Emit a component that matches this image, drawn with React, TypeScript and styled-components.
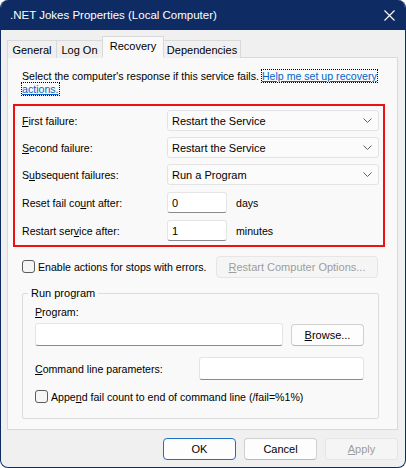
import React from 'react';
import styled, { createGlobalStyle } from 'styled-components';

const GlobalStyle = createGlobalStyle`
  html, body {
    margin: 0;
    padding: 0;
    background: #ffffff;
  }
  body {
    font-family: "Liberation Sans", Arial, sans-serif;
    font-size: 10.6px;
    color: #000000;
  }
`;

const Window = styled.div`
  width: 406px;
  height: 468px;
  box-sizing: border-box;
  display: flex;
  flex-direction: column;
  background: #f0f0f0;
  border: 1px solid #0e2b63;
  border-top: none;
  border-radius: 8px;
  overflow: hidden;
`;

const TitleBar = styled.div`
  height: 30px;
  flex-shrink: 0;
  display: flex;
  align-items: center;
  justify-content: space-between;
  padding: 0 10px 0 9px;
  background: #0e2b63;
  color: #ffffff;
  font-family: "Liberation Sans", Arial, sans-serif;
  font-size: 11.5px;
`;

const Body = styled.div`
  flex: 1;
  display: flex;
  flex-direction: column;
  padding: 7px 7px 0 6px;
`;

const TabStrip = styled.div`
  display: flex;
  align-items: flex-end;
  height: 21px;
  margin-bottom: -1px;
  padding-left: 1px;
`;

const Tab = styled.div<{ $active?: boolean; $w: number }>`
  position: relative;
  box-sizing: border-box;
  width: ${p => p.$w}px;
  height: ${p => (p.$active ? 22 : 18)}px;
  margin-left: -1px;
  border: 1px solid #d9d9d9;
  border-bottom: ${p => (p.$active ? '1px solid #f9f9f9' : 'none')};
  background: ${p => (p.$active ? '#f9f9f9' : '#f0f0f0')};
  z-index: ${p => (p.$active ? 1 : 0)};
  display: flex;
  align-items: center;
  justify-content: center;
  padding-bottom: ${p => (p.$active ? 3 : 0)}px;
  font-size: 11px;
`;

const Panel = styled.div`
  height: 373px;
  box-sizing: border-box;
  border: 1px solid #d9d9d9;
  background: #f9f9f9;
  display: flex;
  flex-direction: column;
`;

const Intro = styled.p`
  margin: 12px 10px 0 14px;
  line-height: 13px;
`;

const Link = styled.span`
  color: #0066cc;
  text-decoration: underline;
  outline: 1px dotted #000000;
  outline-offset: 0;
  white-space: nowrap;
`;

const Highlight = styled.div`
  margin: 8px 12px 0 5px;
  border: 2px solid #ee1111;
  padding: 4px 4px 4px 7px;
  display: flex;
  flex-direction: column;
  gap: 6px;
`;

const Row = styled.div<{ $gapTop?: number }>`
  display: grid;
  grid-template-columns: 145px auto 1fr;
  align-items: center;
  height: 21px;
  margin-top: ${p => p.$gapTop ?? 0}px;
`;

const Combo = styled.div`
  grid-column: 2 / 4;
  box-sizing: border-box;
  height: 21px;
  display: flex;
  align-items: center;
  justify-content: space-between;
  padding: 0 6px 0 4px;
  background: #fbfbfb;
  border: 1px solid #e3e3e3;
  border-radius: 3px;
  font-size: 11px;
`;

const TextBox = styled.div<{ $w?: number; $h?: number }>`
  box-sizing: border-box;
  width: ${p => (p.$w ? `${p.$w}px` : 'auto')};
  height: ${p => p.$h ?? 21}px;
  display: flex;
  align-items: center;
  padding-left: 4px;
  background: #ffffff;
  border: 1px solid #e5e5e5;
  border-bottom-color: #8a8a8a;
  border-radius: 3px;
  font-size: 11px;
`;

const Unit = styled.span`
  margin-left: 9px;
`;

const Key = styled.u`
  text-decoration: underline;
  text-underline-offset: 1px;
`;

const CheckRow = styled.div<{ $m: string }>`
  display: flex;
  align-items: center;
  margin: ${p => p.$m};
  height: 21px;
`;

const Check = styled.span`
  box-sizing: border-box;
  width: 13px;
  height: 13px;
  border: 1px solid #5c5c5c;
  border-radius: 3px;
  background: #f5f5f5;
  margin-right: 3px;
  flex-shrink: 0;
`;

const Button = styled.div<{ $w: number; $disabled?: boolean; $default?: boolean }>`
  box-sizing: border-box;
  width: ${p => p.$w}px;
  height: 22px;
  display: flex;
  align-items: center;
  justify-content: center;
  border-radius: 4px;
  font-size: 11px;
  background: ${p => (p.$disabled ? '#f5f5f5' : '#fdfdfd')};
  color: ${p => (p.$disabled ? '#9d9d9d' : '#000000')};
  border: 1px solid ${p => (p.$default ? '#1c6fc4' : p.$disabled ? '#e5e5e5' : '#d0d0d0')};
  border-bottom-color: ${p => (p.$default ? '#1c6fc4' : p.$disabled ? '#e5e5e5' : '#b8b8b8')};
`;

const PushRight = styled.div`
  margin-left: auto;
`;

const Group = styled.fieldset`
  margin: 10px 18px 0 14px;
  padding: 6px 14px 11px 12px;
  border: 1px solid #dcdcdc;
  border-radius: 2px;
  min-width: 0;
`;

const Legend = styled.legend`
  padding: 0 3px;
  margin-left: -7px;
  line-height: 13px;
  font-size: 11px;
`;

const FieldLabel = styled.div`
  line-height: 13px;
  margin-bottom: 4px;
`;

const InlineRow = styled.div<{ $mt: number }>`
  display: flex;
  align-items: center;
  justify-content: space-between;
  margin-top: ${p => p.$mt}px;
`;

const Footer = styled.div`
  display: flex;
  justify-content: flex-end;
  gap: 8px;
  margin-top: 8px;
`;

const Chevron = () => (
  <svg width="9" height="5" viewBox="0 0 9 5">
    <path d="M0.5 0.5 L4.5 4.5 L8.5 0.5" fill="none" stroke="#5f5f5f" strokeWidth="1" />
  </svg>
);

const CloseIcon = () => (
  <svg width="11" height="11" viewBox="0 0 11 11">
    <path d="M0.5 0.5 L10.5 10.5 M10.5 0.5 L0.5 10.5" stroke="#ffffff" strokeWidth="1.1" />
  </svg>
);

const App: React.FC = () => {
  return (
    <>
      <GlobalStyle />
      <Window>
        <TitleBar>
          <span>.NET Jokes Properties (Local Computer)</span>
          <CloseIcon />
        </TitleBar>
        <Body>
          <TabStrip>
            <Tab $w={50}>General</Tab>
            <Tab $w={47}>Log On</Tab>
            <Tab $w={62} $active>Recovery</Tab>
            <Tab $w={78}>Dependencies</Tab>
          </TabStrip>
          <Panel>
            <Intro>
              Select the computer's response if this service fails.{' '}
              <Link>Help me set up recovery</Link>
              <br />
              <Link>actions.</Link>
            </Intro>
            <Highlight>
              <Row>
                <span><Key>F</Key>irst failure:</span>
                <Combo>Restart the Service<Chevron /></Combo>
              </Row>
              <Row>
                <span><Key>S</Key>econd failure:</span>
                <Combo>Restart the Service<Chevron /></Combo>
              </Row>
              <Row>
                <span>S<Key>u</Key>bsequent failures:</span>
                <Combo>Run a Program<Chevron /></Combo>
              </Row>
              <Row $gapTop={1}>
                <span>Reset fail co<Key>u</Key>nt after:</span>
                <TextBox $w={60}>0</TextBox>
                <Unit>days</Unit>
              </Row>
              <Row $gapTop={1}>
                <span>Restart ser<Key>v</Key>ice after:</span>
                <TextBox $w={60}>1</TextBox>
                <Unit>minutes</Unit>
              </Row>
            </Highlight>
            <CheckRow $m="9px 19px 0 14px">
              <Check />
              <span>Enable actions for stops with errors.</span>
              <PushRight>
                <Button $w={162} $disabled><span><Key>R</Key>estart Computer Options...</span></Button>
              </PushRight>
            </CheckRow>
            <Group>
              <Legend>Run program</Legend>
              <FieldLabel><Key>P</Key>rogram:</FieldLabel>
              <InlineRow $mt={0}>
                <TextBox $w={248} $h={23} />
                <Button $w={73}><span><Key>B</Key>rowse...</span></Button>
              </InlineRow>
              <InlineRow $mt={11}>
                <span><Key>C</Key>ommand line parameters:</span>
                <TextBox $w={165} $h={23} />
              </InlineRow>
              <CheckRow $m="6px 0 0 0">
                <Check />
                <span>Appe<Key>n</Key>d fail count to end of command line (/fail=%1%)</span>
              </CheckRow>
            </Group>
          </Panel>
          <Footer>
            <Button $w={73} $default>OK</Button>
            <Button $w={73}>Cancel</Button>
            <Button $w={73} $disabled><span><Key>A</Key>pply</span></Button>
          </Footer>
        </Body>
      </Window>
    </>
  );
};

export default App;
